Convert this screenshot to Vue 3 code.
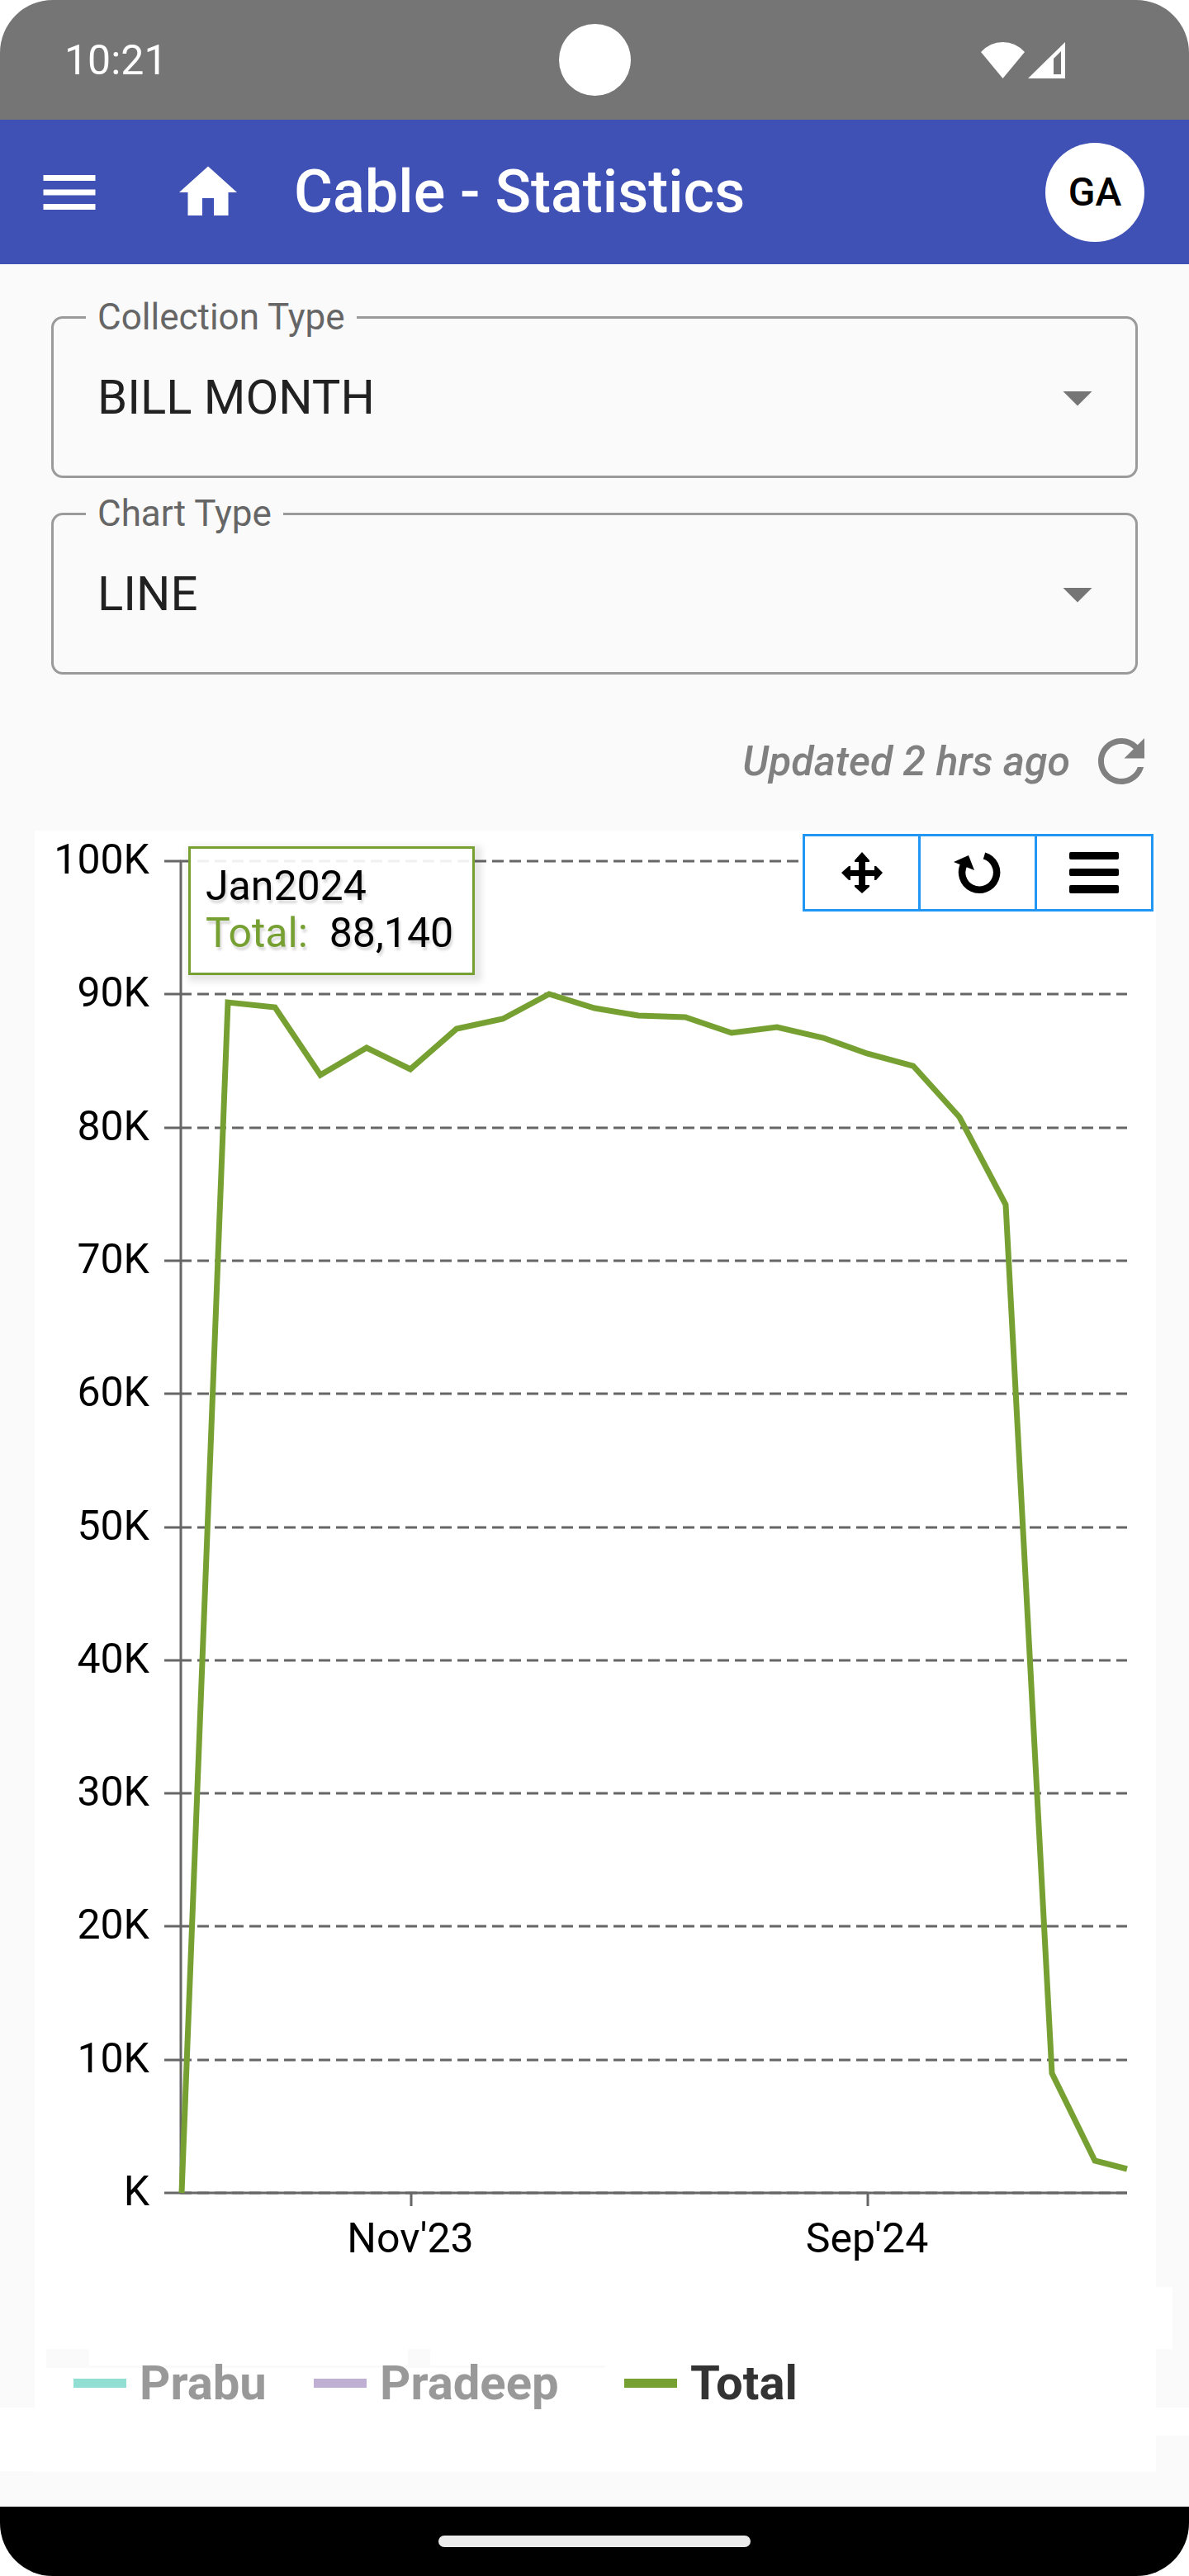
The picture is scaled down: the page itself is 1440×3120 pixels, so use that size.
<script setup>
import { ref, computed } from 'vue'

const collectionType = ref('BILL MONTH')
const chartType = ref('LINE')

const collectionTypes = ['BILL MONTH', 'COLLECTION MONTH']
const chartTypes = ['LINE', 'BAR']

const axisTop = 37
const axisBottom = 1650
const axisLeft = 177
const axisRight = 1323

const gridLines = Array.from({ length: 11 }, (_, i) => ({
  label: i === 0 ? 'K' : `${i * 10}K`,
  y: Math.round(axisBottom - (i * (axisBottom - axisTop)) / 10)
}))

const months = [
  { label: "Nov'23", x: 456 },
  { label: "Sep'24", x: 1009 }
]

const total = [
  [178, 1650], [234, 208], [291, 214], [346, 296], [402, 263], [455, 289],
  [511, 240], [567, 228], [623, 198], [678, 215], [731, 224], [788, 226],
  [844, 245], [899, 238], [955, 251], [1008, 270], [1064, 285], [1120, 347],
  [1176, 453], [1232, 1505], [1284, 1611], [1323, 1621]
]

const totalLine = computed(() => total.map((p) => p.join(',')).join(' '))

const series = [
  { name: 'Prabu', tone: 'teal' },
  { name: 'Pradeep', tone: 'violet' },
  { name: 'Total', tone: 'green' }
]
</script>

<template>
  <div class="phone">
    <div class="status">
      <span class="time">10:21</span>
      <span class="camera"></span>
      <span class="signals">
        <svg width="53" height="44" viewBox="0 0 53 44" aria-hidden="true">
          <path d="M0 12Q11 0 26.500 0T53 12L26.500 44z" fill="#fff" />
        </svg>
        <svg width="45" height="44" viewBox="0 0 45 44" aria-hidden="true">
          <path d="M45 0V44H0zM40 11L31 20V39H40z" fill="#fff" fill-rule="evenodd" />
        </svg>
      </span>
    </div>

    <header class="bar">
      <button class="icon-button" aria-label="Menu">
        <svg width="84" height="84" viewBox="0 0 24 24"><path d="M3 18h18v-2H3v2zm0-5h18v-2H3v2zm0-7v2h18V6H3z" /></svg>
      </button>
      <a class="home" href="#" aria-label="Home">
        <svg width="84" height="84" viewBox="0 0 24 24"><path d="M10 20v-6h4v6h5v-8h3L12 3 2 12h3v8z" /></svg>
      </a>
      <h1 class="title">Cable - Statistics</h1>
      <button class="avatar">GA</button>
    </header>

    <main>
      <form class="filters">
        <div class="field">
          <label for="collection-type">Collection Type</label>
          <select id="collection-type" v-model="collectionType">
            <option v-for="t in collectionTypes" :key="t">{{ t }}</option>
          </select>
          <svg class="caret" width="84" height="84" viewBox="0 0 24 24" aria-hidden="true"><path d="M7 10l5 5 5-5z" /></svg>
        </div>
        <div class="field">
          <label for="chart-type">Chart Type</label>
          <select id="chart-type" v-model="chartType">
            <option v-for="t in chartTypes" :key="t">{{ t }}</option>
          </select>
          <svg class="caret" width="84" height="84" viewBox="0 0 24 24" aria-hidden="true"><path d="M7 10l5 5 5-5z" /></svg>
        </div>
      </form>

      <div class="updated">
        <em>Updated 2 hrs ago</em>
        <button class="icon-button" aria-label="Refresh">
          <svg width="84" height="84" viewBox="0 0 24 24"><path d="M17.650 6.350C16.200 4.900 14.210 4 12 4c-4.420 0-7.990 3.580-7.990 8s3.570 8 7.990 8c3.730 0 6.840-2.550 7.730-6h-2.080c-.82 2.330-3.040 4-5.650 4-3.310 0-6-2.690-6-6s2.690-6 6-6c1.660 0 3.140.69 4.220 1.780L13 11h7V4l-2.350 2.350z" /></svg>
        </button>
      </div>

      <section class="card">
        <svg class="plot" viewBox="0 0 1358 1846" role="img" aria-label="Total by bill month">
          <g class="bleed">
            <rect x="1356" y="1764" width="22" height="75" />
            <rect x="-42" y="1910" width="44" height="77" />
            <rect x="1356" y="1910" width="42" height="34" />
          </g>
          <g class="shade">
            <rect x="14" y="1839" width="52" height="23" />
            <rect x="452" y="1839" width="27" height="23" />
            <rect x="14" y="1859" width="677" height="3" />
          </g>
          <g v-for="line in gridLines" :key="line.label">
            <line class="axis" x1="157" :x2="axisLeft" :y1="line.y" :y2="line.y" />
            <line class="dashed" :x1="axisLeft - 1" :x2="axisRight" :y1="line.y" :y2="line.y" />
            <text class="tick" x="139" :y="line.y + 15" text-anchor="end">{{ line.label }}</text>
          </g>
          <line class="axis" :x1="axisLeft" :x2="axisLeft" :y1="axisTop" :y2="axisBottom" />
          <line class="axis" :x1="axisLeft" :x2="axisRight" :y1="axisBottom" :y2="axisBottom" />
          <g v-for="m in months" :key="m.label">
            <line class="axis" :x1="m.x" :x2="m.x" :y1="axisBottom" :y2="axisBottom + 16" />
            <text class="tick" :x="m.x - 1" y="1722" text-anchor="middle">{{ m.label }}</text>
          </g>
          <polyline class="total" :points="totalLine" />
        </svg>

        <div class="tooltip">
          <div>Jan2024</div>
          <div class="row"><span class="key">Total:</span><span>88,140</span></div>
        </div>

        <div class="tools">
          <button aria-label="Pan">
            <svg width="50" height="50" viewBox="0 0 50 50"><path d="M25 0l9 10v2h-5v10h11v-5h2l8 8-8 9h-2v-5H29v11h5v2l-9 8-9-8v-2h5V29H11v5H9l-9-9 9-8h2v5h10V12h-5v-2z" /></svg>
          </button>
          <button aria-label="Reset">
            <svg width="58" height="50" viewBox="0 0 58 50">
              <path d="M37 4.500A21 21 0 1 1 13 14" fill="none" stroke="#000" stroke-width="8.500" />
              <path d="M0 12L18 4l7 18z" />
            </svg>
          </button>
          <button aria-label="Chart menu">
            <svg width="60" height="50" viewBox="0 0 60 50"><rect width="60" height="9" rx="2" /><rect y="20" width="60" height="9" rx="2" /><rect y="40" width="60" height="10" rx="2" /></svg>
          </button>
        </div>

        <div class="legend">
          <button v-for="s in series" :key="s.name" :class="s.tone">
            <span class="swatch"></span>{{ s.name }}
          </button>
        </div>
      </section>
    </main>

    <footer class="nav"><span class="handle"></span></footer>
  </div>
</template>

<style>
body {
  margin: 0;
  background: #fff;
}
</style>

<style scoped>
.phone {
  display: flex;
  flex-direction: column;
  min-height: 100vh;
  border-radius: 64px;
  overflow: hidden;
  background: #fafafa;
  font-family: Roboto, "Liberation Sans", sans-serif;
}
button {
  padding: 0;
  border: 0;
  background: none;
  font: inherit;
  color: inherit;
  cursor: pointer;
}
svg {
  display: block;
}
.status {
  display: grid;
  grid-template-columns: 1fr auto 1fr;
  align-items: center;
  height: 145px;
  padding: 0 150px 0 78px;
  background: #757575;
  color: #fff;
  font-size: 50px;
}
.time {
  line-height: 58px;
}
.camera {
  width: 87px;
  height: 87px;
  margin-left: 72px;
  border-radius: 50%;
  background: #fff;
}
.signals {
  display: flex;
  justify-content: flex-end;
  gap: 4px;
}
.bar {
  display: flex;
  align-items: center;
  height: 175px;
  padding: 0 54px 0 42px;
  background: #3f51b5;
  color: #fff;
}
.bar svg {
  fill: #fff;
}
.home {
  margin: 0 62px 0 84px;
}
.title {
  flex: 1;
  margin: 0;
  font-size: 72px;
  line-height: 84px;
  font-weight: 500;
}
.avatar {
  width: 120px;
  height: 120px;
  border-radius: 50%;
  background: #fff;
  color: #000;
  font-size: 48px;
  font-weight: 500;
}
main {
  flex: 1;
  padding-bottom: 42px;
}
.filters {
  display: flex;
  flex-direction: column;
  gap: 42px;
  padding: 63px 62px;
}
.field {
  position: relative;
  border: 3px solid #9a9a9a;
  border-radius: 14px;
}
.field label {
  position: absolute;
  top: -28px;
  left: 39px;
  padding: 0 14px;
  background: #fafafa;
  color: #666;
  font-size: 44px;
  line-height: 52px;
}
.field select {
  display: block;
  width: 100%;
  height: 190px;
  padding: 0 120px 0 53px;
  border: 0;
  background: none;
  appearance: none;
  color: #212121;
  font: 58px/68px Roboto, "Liberation Sans", sans-serif;
}
.caret {
  position: absolute;
  top: 53px;
  right: 28px;
  fill: #757575;
  pointer-events: none;
}
.updated {
  display: flex;
  align-items: center;
  justify-content: flex-end;
  gap: 20px;
  padding-right: 40px;
  color: #808080;
  font-size: 50px;
  line-height: 58px;
  font-weight: 500;
}
.updated svg {
  fill: #808080;
}
.card {
  position: relative;
  margin: 42px 40px 0 42px;
  padding-bottom: 74px;
  background: #fff;
}
.plot {
  width: 100%;
  height: auto;
  overflow: visible;
}
.bleed {
  fill: #fff;
}
.shade {
  fill: #fafafa;
}
.axis,
.dashed {
  stroke: #666;
  stroke-width: 3px;
}
.dashed {
  stroke-dasharray: 14 7;
}
.tick {
  font-size: 50px;
  fill: #000;
}
.total {
  fill: none;
  stroke: #77a033;
  stroke-width: 7px;
}
.tooltip {
  position: absolute;
  top: 19px;
  left: 186px;
  box-sizing: border-box;
  width: 347px;
  height: 156px;
  padding: 17px 18px;
  border: 3px solid #77a033;
  background: rgba(255, 255, 255, 0.9);
  box-shadow: 4px 4px 8px 4px rgba(0, 0, 0, 0.1);
  color: #000;
  font-size: 50px;
  line-height: 57px;
  text-shadow: 2px 4px 3px rgba(0, 0, 0, 0.15);
}
.row {
  display: flex;
  gap: 26px;
}
.key {
  color: #77a033;
}
.tools {
  position: absolute;
  top: 4px;
  right: 3px;
  display: flex;
  border: 3px solid #2196f3;
  background: #fff;
}
.tools button {
  display: grid;
  place-items: center;
  width: 137px;
  height: 88px;
}
.tools button + button {
  width: 141px;
  border-left: 3px solid #2196f3;
}
.legend {
  display: grid;
  grid-template-columns: 291px 376px auto;
  padding-left: 47px;
  font-size: 58px;
  line-height: 68px;
  font-weight: 700;
}
.legend button {
  display: flex;
  align-items: center;
  gap: 16px;
  color: #999;
}
.legend .green {
  color: #333;
}
.swatch {
  width: 64px;
  height: 11px;
}
.teal .swatch {
  background: #91dfd3;
}
.violet .swatch {
  background: #bfb0d3;
}
.green .swatch {
  background: #77a033;
}
.nav {
  display: flex;
  align-items: center;
  justify-content: center;
  height: 84px;
  background: #000;
}
.handle {
  width: 378px;
  height: 14px;
  border-radius: 7px;
  background: #ebebeb;
}
</style>
